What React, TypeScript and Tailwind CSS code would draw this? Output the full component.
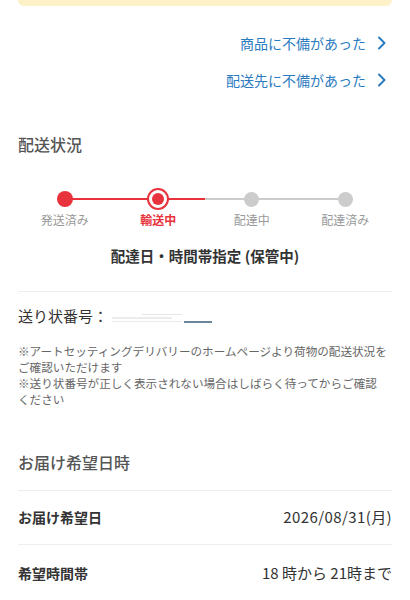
import React from 'react';

const steps = [
  { label: '発送済み', state: 'done' },
  { label: '輸送中', state: 'current' },
  { label: '配達中', state: 'todo' },
  { label: '配達済み', state: 'todo' },
];

const Chevron: React.FC = () => (
  <svg width="10" height="14" viewBox="0 0 10 14" fill="none" className="ml-[11px]">
    <path d="M2 1.5 L7.5 7 L2 12.5" stroke="#2b7bbf" strokeWidth="2" strokeLinecap="round" strokeLinejoin="round" />
  </svg>
);

const App: React.FC = () => {
  return (
    <div
      className="w-[410px] min-h-[600px] bg-white px-[18px] text-[#333]"
      style={{ fontFamily: '"Noto Sans CJK JP", "Noto Sans", sans-serif' }}
    >
      {/* bottom of notice box */}
      <div className="h-[6px] rounded-b-[10px] bg-[#fdf1c8]" />

      {/* Links */}
      <div className="mt-[27px] flex flex-col items-end gap-[17px] pr-[5px]">
        <a className="flex items-center text-[14px] leading-[20px] text-[#2b7bbf]">
          商品に不備があった
          <Chevron />
        </a>
        <a className="flex items-center text-[14px] leading-[20px] text-[#2b7bbf]">
          配送先に不備があった
          <Chevron />
        </a>
      </div>

      {/* Delivery status */}
      <h2 className="mt-[42px] text-[16px] font-medium leading-[24px] text-[#555]">配送状況</h2>

      <div className="mt-[31px] grid grid-cols-4">
        {steps.map((s, i) => {
          const red = i <= 1;
          return (
            <div key={s.label} className="flex flex-col items-center">
              <div className="relative flex h-[24px] w-full items-center">
                <div className={`h-[2px] flex-1 ${i === 0 ? 'bg-transparent' : red ? 'bg-[#e8333c]' : 'bg-[#cccccc]'}`} />
                <div className={`h-[2px] flex-1 ${i === steps.length - 1 ? 'bg-transparent' : red ? 'bg-[#e8333c]' : 'bg-[#cccccc]'}`} />
                <div className="absolute inset-0 flex items-center justify-center">
                  {s.state === 'done' && <div className="h-[16px] w-[16px] rounded-full bg-[#e8333c]" />}
                  {s.state === 'current' && (
                    <div className="flex h-[22px] w-[22px] items-center justify-center rounded-full border-2 border-[#e8333c] bg-white">
                      <div className="h-[12px] w-[12px] rounded-full bg-[#e8333c]" />
                    </div>
                  )}
                  {s.state === 'todo' && <div className="h-[15px] w-[15px] rounded-full bg-[#cccccc]" />}
                </div>
              </div>
              <span
                className={`mt-[1px] text-[12px] leading-[16px] ${
                  s.state === 'current' ? 'font-bold text-[#e8333c]' : 'text-[#999]'
                }`}
              >
                {s.label}
              </span>
            </div>
          );
        })}
      </div>

      <p className="mt-[18px] text-center text-[14.5px] font-bold leading-[20px] text-[#333]">
        配達日・時間帯指定 (保管中)
      </p>

      <div className="mt-[25px] border-t border-[#eeeeee]" />

      <div className="mt-[13px] flex items-center">
        <span className="text-[15px] leading-[22px] text-[#333]">送り状番号：</span>
        {/* blurred tracking number */}
        <div className="ml-[4px] flex flex-col gap-[2px] pt-[4px]">
          <div className="ml-[30px] h-[1px] w-[40px] bg-[#e6e6e6]" />
          <div className="h-[2px] w-[60px] bg-[#ececec]" />
          <div className="flex items-center">
            <div className="h-[1px] w-[70px] bg-[#eaeaea]" />
            <div className="ml-[2px] h-[2px] w-[28px] bg-[#6b8599]" />
          </div>
        </div>
      </div>

      <div className="mt-[16px] whitespace-nowrap text-[11.6px] leading-[16px] text-[#666]">
        <p>
          ※アートセッティングデリバリーのホームページより荷物の配送状況を
          <br />
          ご確認いただけます
        </p>
        <p>
          ※送り状番号が正しく表示されない場合はしばらく待ってからご確認
          <br />
          ください
        </p>
      </div>

      {/* Desired delivery */}
      <h2 className="mt-[43px] text-[16px] font-medium leading-[24px] text-[#555]">お届け希望日時</h2>

      <div className="mt-[16px] border-t border-[#eeeeee]">
        <div className="flex h-[54px] items-center justify-between border-b border-[#eeeeee]">
          <span className="text-[14px] font-bold text-[#333]">お届け希望日</span>
          <span className="text-[15px] tracking-[0.4px] text-[#333]">2026/08/31(月)</span>
        </div>
        <div className="flex h-[56px] items-center justify-between">
          <span className="text-[14px] font-bold text-[#333]">希望時間帯</span>
          <span className="text-[15px] text-[#333]">18 時から 21時まで</span>
        </div>
      </div>
    </div>
  );
};

export default App;
